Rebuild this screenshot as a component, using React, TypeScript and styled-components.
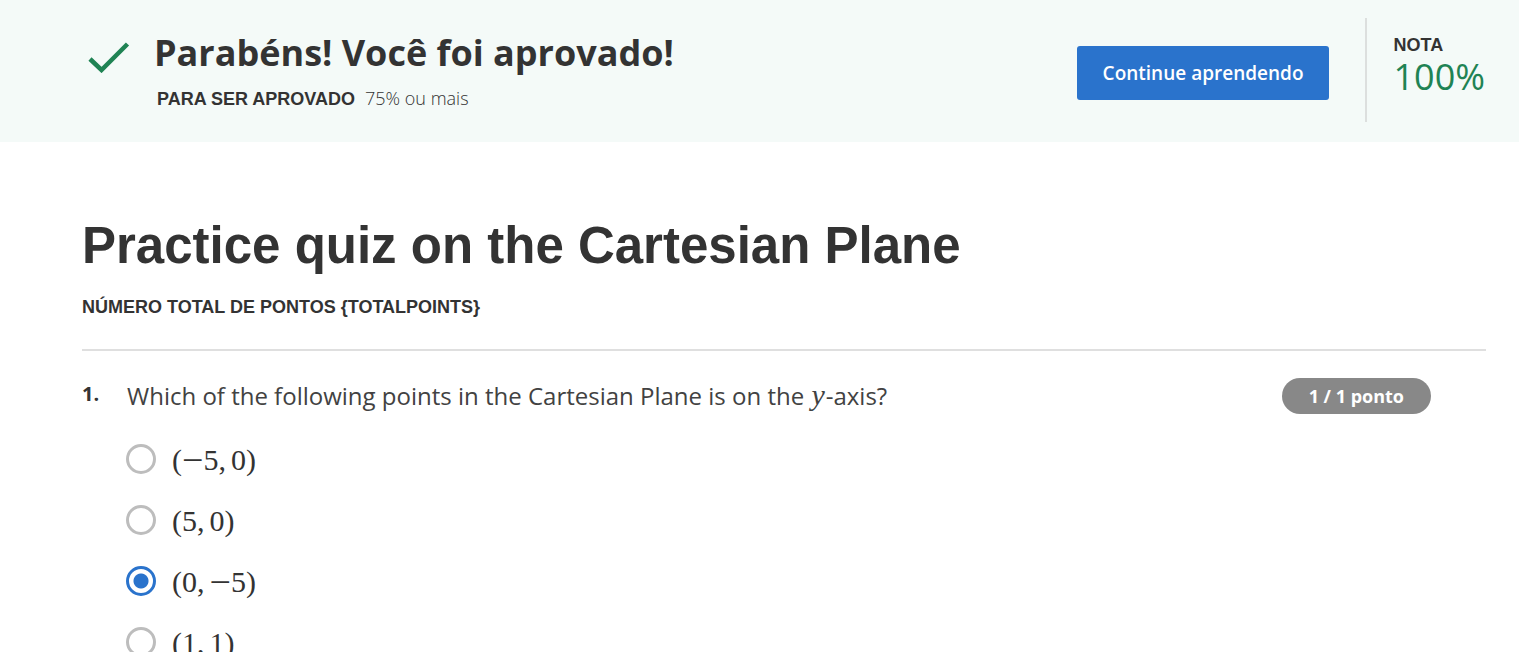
import React, { useState } from "react";
import styled, { createGlobalStyle } from "styled-components";

const sans = `"Open Sans", "Noto Sans", sans-serif`;
const grotesque = `"Liberation Sans", Arial, sans-serif`;
const math = `"Liberation Serif", "Times New Roman", serif`;

const GlobalStyle = createGlobalStyle`
  *, *::before, *::after { box-sizing: border-box; }
  body {
    margin: 0;
    background: #fff;
    color: #333;
    font-family: ${sans};
  }
  h1, h2, p, fieldset, legend { margin: 0; padding: 0; border: 0; }
`;

const Banner = styled.header`
  display: flex;
  align-items: flex-start;
  gap: 36px;
  padding: 18px 34px 20px 88px;
  background: #f4faf8;
`;

const Result = styled.div`
  display: flex;
  flex: 1;
  gap: 24px;
`;

const CheckIcon = styled.svg`
  flex: none;
  width: 42px;
  height: 32px;
  margin-top: 23px;
`;

const ResultTitle = styled.h2`
  padding-top: 10px;
  font-size: 36px;
  font-weight: 700;
  line-height: 50px;
`;

const Requirement = styled.p`
  display: flex;
  align-items: baseline;
  gap: 10px;
  padding: 8px 0 0 3px;
  font-size: 18px;
  font-weight: 300;
  line-height: 24px;
`;

const Caption = styled.span`
  font-family: ${grotesque};
  font-size: 18px;
  font-weight: 700;
  line-height: 24px;
`;

const ContinueButton = styled.button`
  height: 54px;
  margin-top: 28px;
  padding: 0 26px;
  border: 0;
  border-radius: 3px;
  background: #2a73cc;
  color: #fff;
  font: 600 19px/24px ${sans};
  cursor: pointer;
`;

const Grade = styled.div`
  display: flex;
  flex-direction: column;
  height: 104px;
  padding: 15px 0 0 26px;
  border-left: 2px solid #dcdfde;
`;

const GradeValue = styled.span`
  color: #1f8354;
  font-size: 36px;
  line-height: 40px;
`;

const Quiz = styled.main`
  padding: 72px 33px 40px 82px;
`;

const QuizTitle = styled.h1`
  font: 700 51px/64px ${grotesque};
`;

const Points = styled.p`
  padding: 17px 0 30px;
  border-bottom: 2px solid #dfdfdf;
  line-height: 24px;
`;

const Question = styled.section`
  display: grid;
  grid-template-columns: 45px 1fr auto;
  align-items: start;
  padding: 27px 55px 0 0;
`;

const QuestionNumber = styled.span`
  font-size: 20px;
  font-weight: 700;
  line-height: 32px;
`;

const Prompt = styled.p`
  color: #424242;
  font-size: 24px;
  line-height: 36px;
`;

const Variable = styled.i`
  margin: 0 1px;
  font: italic 400 30px/30px ${math};
`;

const Score = styled.span`
  padding: 0 27px;
  border-radius: 18px;
  background: #888;
  color: #fff;
  font-size: 18px;
  font-weight: 700;
  line-height: 36px;
`;

const Options = styled.fieldset`
  display: grid;
  grid-column: 2;
  gap: 25px;
  min-width: 0;
  padding-top: 27px;
`;

const Option = styled.label`
  display: flex;
  align-items: center;
  gap: 16px;
  cursor: pointer;
`;

const Radio = styled.input`
  appearance: none;
  flex: none;
  width: 30px;
  height: 30px;
  margin: 0 0 0 -1px;
  border: 3px solid #bdbdbd;
  border-radius: 50%;
  background: #fff;
  &:checked {
    border-color: #2a73cc;
    background: radial-gradient(circle, #2a73cc 7px, #fff 8px);
  }
`;

const Point = styled.span`
  display: flex;
  align-items: center;
  padding-top: 2px;
  font: 400 30px/34px ${math};
`;

const Minus = styled.span`
  font-size: 38px;
`;

const Comma = styled.span`
  margin-right: 5px;
`;

const points: [number, number][] = [
  [-5, 0],
  [5, 0],
  [0, -5],
  [1, 1],
];

function Coordinate({ value }: { value: number }) {
  return (
    <>
      {value < 0 && <Minus>−</Minus>}
      <span>{Math.abs(value)}</span>
    </>
  );
}

export default function App() {
  const [selected, setSelected] = useState(2);
  return (
    <>
      <GlobalStyle />
      <Banner>
        <Result>
          <CheckIcon viewBox="0 0 42 32" aria-hidden="true">
            <path d="M2 18 13.5 29 39.5 3" fill="none" stroke="#1f8354" strokeWidth="4.5" />
          </CheckIcon>
          <div>
            <ResultTitle>Parabéns! Você foi aprovado!</ResultTitle>
            <Requirement>
              <Caption>PARA SER APROVADO</Caption>
              <span>75% ou mais</span>
            </Requirement>
          </div>
        </Result>
        <ContinueButton type="button">Continue aprendendo</ContinueButton>
        <Grade>
          <Caption>NOTA</Caption>
          <GradeValue>100%</GradeValue>
        </Grade>
      </Banner>
      <Quiz>
        <QuizTitle>Practice quiz on the Cartesian Plane</QuizTitle>
        <Points>
          <Caption>NÚMERO TOTAL DE PONTOS {"{TOTALPOINTS}"}</Caption>
        </Points>
        <Question>
          <QuestionNumber>1.</QuestionNumber>
          <Prompt id="prompt">
            Which of the following points in the Cartesian Plane is on the <Variable>y</Variable>-axis?
          </Prompt>
          <Score>1 / 1 ponto</Score>
          <Options aria-labelledby="prompt">
            {points.map(([x, y], i) => (
              <Option key={i}>
                <Radio
                  type="radio"
                  name="point"
                  checked={selected === i}
                  onChange={() => setSelected(i)}
                />
                <Point>
                  <span>(</span>
                  <Coordinate value={x} />
                  <Comma>,</Comma>
                  <Coordinate value={y} />
                  <span>)</span>
                </Point>
              </Option>
            ))}
          </Options>
        </Question>
      </Quiz>
    </>
  );
}
